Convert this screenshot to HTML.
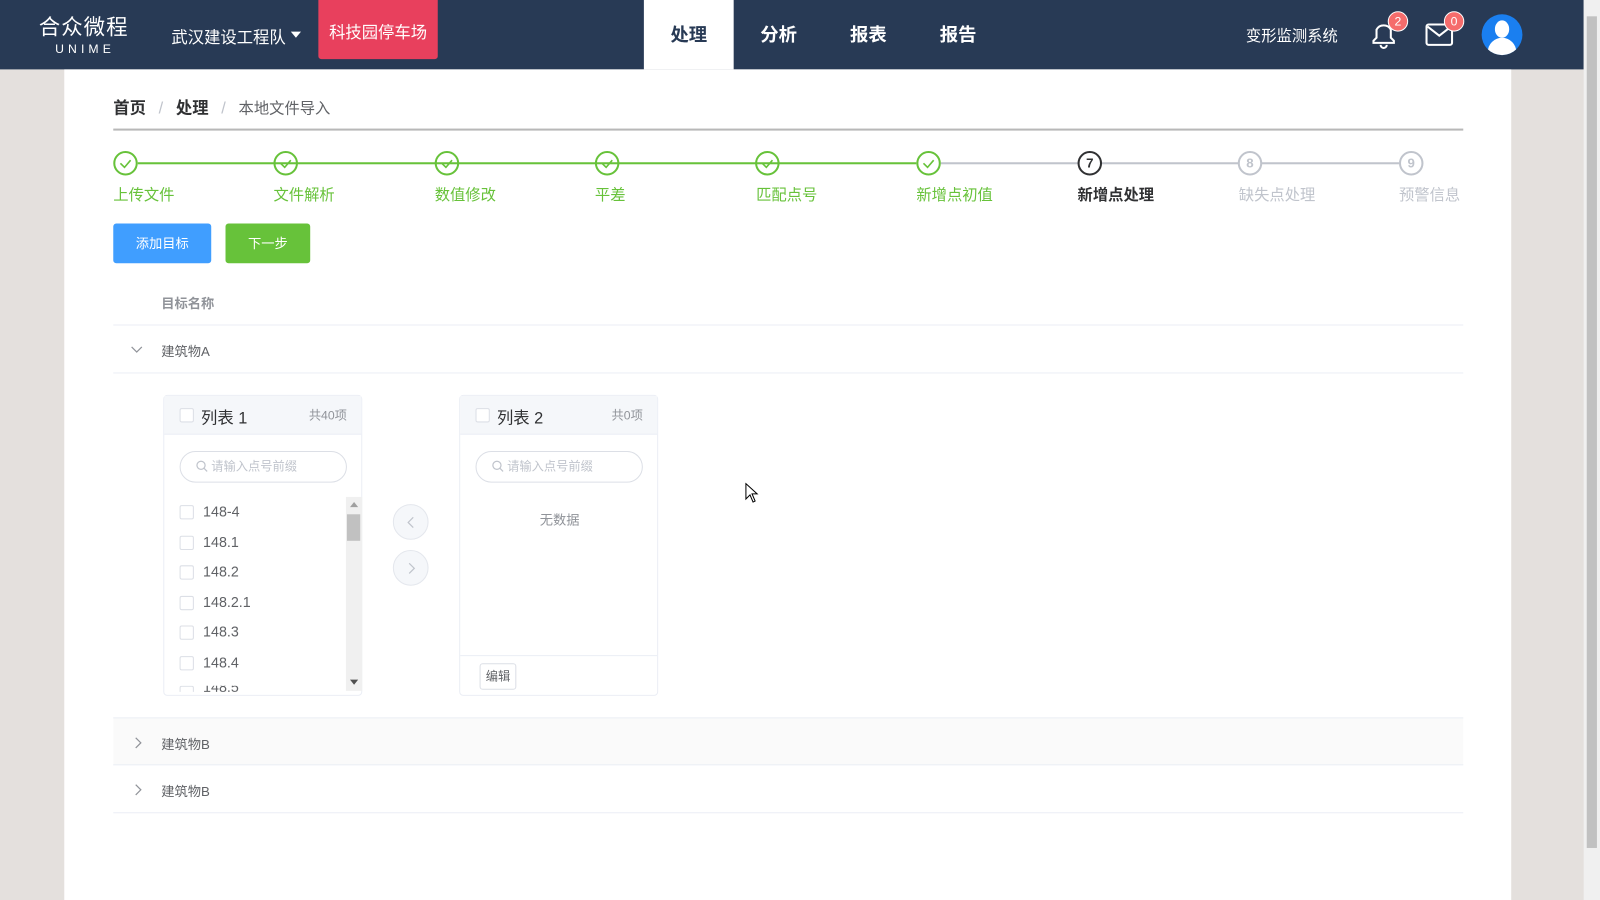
<!DOCTYPE html>
<html><head><meta charset="utf-8"><style>
*{margin:0;padding:0;box-sizing:border-box}
html,body{width:1600px;height:900px;overflow:hidden;background:#e4e0dd}
body{font-family:"Liberation Sans","Noto Sans CJK SC",sans-serif}
#w{position:absolute;left:0;top:0;width:1568px;height:882px;transform:scale(1.020408);transform-origin:0 0;background:#e4e0dd}
.a{position:absolute}
.nav{left:0;top:0;width:1552px;height:68px;background:#283a55;color:#fff}
.main{left:63px;top:68px;width:1418px;height:814px;background:#fff}
.sb{left:1552px;top:0;width:16px;height:882px;background:#f0f0f0}
.step .c{position:absolute;width:24px;height:24px;border-radius:50%;border:2px solid #67c23a;top:148px;text-align:center;font-size:13px;font-weight:bold;line-height:20px}
.step .t{position:absolute;top:180px;font-size:15px;color:#67c23a;white-space:nowrap}
.line{position:absolute;top:159px;height:2px}
.row{position:absolute;left:111px;width:1323px;border-bottom:1px solid #ebeef5;font-size:13px;color:#606266}
.box{position:absolute;top:387px;width:195px;height:295px;border:1px solid #ebeef5;border-radius:4px;background:#fff}
.box .h{height:38px;background:#f5f7fa;border-bottom:1px solid #ebeef5;position:relative}
.cb{position:absolute;width:14px;height:14px;border:1px solid #dcdfe6;border-radius:2px;background:#fff}
.srch{position:absolute;left:15px;top:54px;width:164px;height:31px;border:1px solid #dcdfe6;border-radius:16px;font-size:12px;color:#c0c4cc;padding-left:30px;line-height:29px}
.it{position:absolute;left:38px;font-size:14px;color:#606266}
</style></head><body><div id="w">
<div class="a nav">
 <div class="a" style="left:38px;top:11px;font-size:21px;letter-spacing:1px">合众微程</div>
 <div class="a" style="left:54px;top:41px;font-size:12px;letter-spacing:4px">UNIME</div>
 <div class="a" style="left:168px;top:23px;font-size:16px">武汉建设工程队</div>
 <div class="a" style="left:285px;top:31px;width:0;height:0;border-left:5px solid transparent;border-right:5px solid transparent;border-top:6px solid #fff"></div>
 <div class="a" style="left:312px;top:0;width:117px;height:58px;background:#e8405d;border-radius:0 0 3px 3px;font-size:16px;text-align:center;line-height:66px">科技园停车场</div>
 <div class="a" style="left:631px;top:0;width:88px;height:68px;background:#fff;color:#283a55;font-size:18px;font-weight:bold;text-align:center;line-height:68px">处理</div>
 <div class="a" style="left:719px;top:0;width:88px;font-size:18px;font-weight:bold;text-align:center;line-height:68px">分析</div>
 <div class="a" style="left:807px;top:0;width:88px;font-size:18px;font-weight:bold;text-align:center;line-height:68px">报表</div>
 <div class="a" style="left:895px;top:0;width:88px;font-size:18px;font-weight:bold;text-align:center;line-height:68px">报告</div>
 <div class="a" style="left:1221px;top:24px;font-size:15px">变形监测系统</div>
 <svg class="a" style="left:1342px;top:17px" width="30" height="32" viewBox="0 0 30 32"><path d="M4 25 L4 23 L7 20 L7 12 A8 8 0 0 1 21 12 L21 20 L24 23 L24 25 Z" fill="none" stroke="#fff" stroke-width="2"/><path d="M11 27 A3 3 0 0 0 17 27" fill="none" stroke="#fff" stroke-width="2"/></svg>
 <div class="a" style="left:1360px;top:11px;width:20px;height:20px;border-radius:50%;background:#f56c6c;border:1px solid #fff;font-size:12px;text-align:center;line-height:18px">2</div>
 <svg class="a" style="left:1396px;top:21px" width="30" height="26"><rect x="2" y="3" width="25" height="20" rx="2" fill="none" stroke="#fff" stroke-width="2"/><path d="M3 5 L14.5 14 L26 5" fill="none" stroke="#fff" stroke-width="2"/></svg>
 <div class="a" style="left:1415px;top:11px;width:20px;height:20px;border-radius:50%;background:#f56c6c;border:1px solid #fff;font-size:12px;text-align:center;line-height:18px">0</div>
 <div class="a" style="left:1452px;top:14px;width:40px;height:40px;border-radius:50%;background:#1a7ff0;overflow:hidden">
  <div class="a" style="left:13px;top:6px;width:14px;height:17px;border-radius:50%;background:#fff"></div>
  <div class="a" style="left:6px;top:23px;width:28px;height:20px;border-radius:14px 14px 0 0;background:#fff"></div>
 </div>
</div>
<div class="a main"></div>
<div class="a sb"><div class="a" style="left:3px;top:16px;width:10px;height:815px;background:#c1c1c1"></div></div>

<div class="a" style="left:111px;top:92px;font-size:16px;color:#303133"><b>首页</b> <span style="color:#c0c4cc;margin:0 8px">/</span> <b>处理</b> <span style="color:#c0c4cc;margin:0 8px">/</span> <span style="color:#606266;font-size:15px">本地文件导入</span></div>
<div class="a" style="left:111px;top:126px;width:1323px;height:2px;background:#b8b8b8"></div>

<div class="line" style="left:135px;width:763px;background:#67c23a"></div>
<div class="line" style="left:922px;width:449px;background:#c0c4cc"></div>
<div class="step">
 <div class="c" style="left:111px"></div><div class="c" style="left:268px"></div><div class="c" style="left:426px"></div><div class="c" style="left:583px"></div><div class="c" style="left:740px"></div><div class="c" style="left:898px"></div>
 <div class="c" style="left:1056px;border-color:#303133;color:#303133;background:#fff">7</div>
 <div class="c" style="left:1213px;border-color:#c0c4cc;color:#c0c4cc;background:#fff">8</div>
 <div class="c" style="left:1371px;border-color:#c0c4cc;color:#c0c4cc;background:#fff">9</div>
 <div class="t" style="left:111px">上传文件</div><div class="t" style="left:268px">文件解析</div><div class="t" style="left:426px">数值修改</div><div class="t" style="left:583px">平差</div><div class="t" style="left:741px">匹配点号</div><div class="t" style="left:898px">新增点初值</div>
 <div class="t" style="left:1056px;color:#303133;font-weight:bold">新增点处理</div>
 <div class="t" style="left:1214px;color:#c0c4cc">缺失点处理</div>
 <div class="t" style="left:1371px;color:#c0c4cc">预警信息</div>
</div>
<svg class="a" style="left:0;top:0" width="1500" height="200">
 <g fill="none" stroke="#67c23a" stroke-width="1.6">
 <path d="M118 160l4 4 6-7"/><path d="M275 160l4 4 6-7"/><path d="M433 160l4 4 6-7"/><path d="M590 160l4 4 6-7"/><path d="M747 160l4 4 6-7"/><path d="M905 160l4 4 6-7"/></g>
</svg>

<div class="a" style="left:111px;top:219px;width:96px;height:39px;background:#409eff;border-radius:3px;color:#fff;font-size:13px;text-align:center;line-height:39px">添加目标</div>
<div class="a" style="left:221px;top:219px;width:83px;height:39px;background:#67c23a;border-radius:3px;color:#fff;font-size:13px;text-align:center;line-height:39px">下一步</div>

<div class="row" style="top:272px;height:47px"><span style="position:absolute;left:47px;top:15px;color:#909399;font-weight:bold">目标名称</span></div>
<div class="row" style="top:319px;height:47px"><svg class="a" style="left:17px;top:20px" width="12" height="8"><path d="M1 1l5 5 5-5" fill="none" stroke="#909399" stroke-width="1.2"/></svg><span style="position:absolute;left:47px;top:15px">建筑物A</span></div>

<div class="box" style="left:160px">
 <div class="h"><div class="cb" style="left:15px;top:12px"></div><span class="a" style="left:36px;top:8px;font-size:16px;color:#303133">列表 1</span><span class="a" style="right:14px;top:10px;font-size:12px;color:#909399">共40项</span></div>
 <div class="srch">请输入点号前缀</div>
 <svg class="a" style="left:31px;top:63px" width="12" height="12"><circle cx="5" cy="5" r="4" fill="none" stroke="#c0c4cc" stroke-width="1.2"/><path d="M8 8l3 3" stroke="#c0c4cc" stroke-width="1.2"/></svg>
 <div class="a" style="left:178px;top:99px;width:16px;height:190px;background:#f0f0f0"><div class="a" style="left:1px;top:17px;width:13px;height:26px;background:#c1c1c1"></div>
  <div class="a" style="left:4px;top:5px;border-left:4px solid transparent;border-right:4px solid transparent;border-bottom:5px solid #a0a0a0"></div>
  <div class="a" style="left:4px;top:179px;border-left:4px solid transparent;border-right:4px solid transparent;border-top:5px solid #505050"></div></div>
 <div class="cb" style="left:15px;top:107px"></div><div class="it" style="top:105px">148-4</div>
 <div class="cb" style="left:15px;top:137px"></div><div class="it" style="top:135px">148.1</div>
 <div class="cb" style="left:15px;top:166px"></div><div class="it" style="top:164px">148.2</div>
 <div class="cb" style="left:15px;top:196px"></div><div class="it" style="top:194px">148.2.1</div>
 <div class="cb" style="left:15px;top:225px"></div><div class="it" style="top:223px">148.3</div>
 <div class="cb" style="left:15px;top:255px"></div><div class="it" style="top:253px">148.4</div>
 <div class="a" style="left:0;top:284px;width:178px;height:6px;overflow:hidden"><div class="cb" style="left:15px;top:0px"></div><div class="it" style="top:-7px">148.5</div></div>
</div>
<div class="a" style="left:385px;top:494px;width:35px;height:35px;border-radius:50%;border:1px solid #e4e7ed;background:#f5f7fa"><svg class="a" style="left:13px;top:11px" width="8" height="12"><path d="M6 1L1 6l5 5" fill="none" stroke="#c0c4cc" stroke-width="1.2"/></svg></div>
<div class="a" style="left:385px;top:539px;width:35px;height:35px;border-radius:50%;border:1px solid #e4e7ed;background:#f5f7fa"><svg class="a" style="left:14px;top:11px" width="8" height="12"><path d="M1 1l5 5-5 5" fill="none" stroke="#c0c4cc" stroke-width="1.2"/></svg></div>
<div class="box" style="left:450px">
 <div class="h"><div class="cb" style="left:15px;top:12px"></div><span class="a" style="left:36px;top:8px;font-size:16px;color:#303133">列表 2</span><span class="a" style="right:14px;top:10px;font-size:12px;color:#909399">共0项</span></div>
 <div class="srch">请输入点号前缀</div>
 <svg class="a" style="left:31px;top:63px" width="12" height="12"><circle cx="5" cy="5" r="4" fill="none" stroke="#c0c4cc" stroke-width="1.2"/><path d="M8 8l3 3" stroke="#c0c4cc" stroke-width="1.2"/></svg>
 <div class="a" style="left:0;width:195px;top:111px;text-align:center;font-size:13px;color:#909399">无数据</div>
 <div class="a" style="left:0;top:254px;width:193px;border-top:1px solid #ebeef5"></div>
 <div class="a" style="left:19px;top:262px;width:36px;height:26px;border:1px solid #dcdfe6;border-radius:3px;font-size:12px;color:#606266;text-align:center;line-height:24px">编辑</div>
</div>

<div class="row" style="top:703px;height:47px;background:#fafafa;border-top:1px solid #ebeef5"><svg class="a" style="left:21px;top:18px" width="8" height="12"><path d="M1 1l5 5-5 5" fill="none" stroke="#909399" stroke-width="1.2"/></svg><span style="position:absolute;left:47px;top:15px">建筑物B</span></div>
<div class="row" style="top:750px;height:47px"><svg class="a" style="left:21px;top:18px" width="8" height="12"><path d="M1 1l5 5-5 5" fill="none" stroke="#909399" stroke-width="1.2"/></svg><span style="position:absolute;left:47px;top:15px">建筑物B</span></div>

<svg class="a" style="left:730px;top:473px" width="14" height="20"><path d="M1 1 L1 16 L5 12 L8 19 L10 18 L7 11 L12 11 Z" fill="#fff" stroke="#000" stroke-width="1"/></svg>
</div></body></html>
